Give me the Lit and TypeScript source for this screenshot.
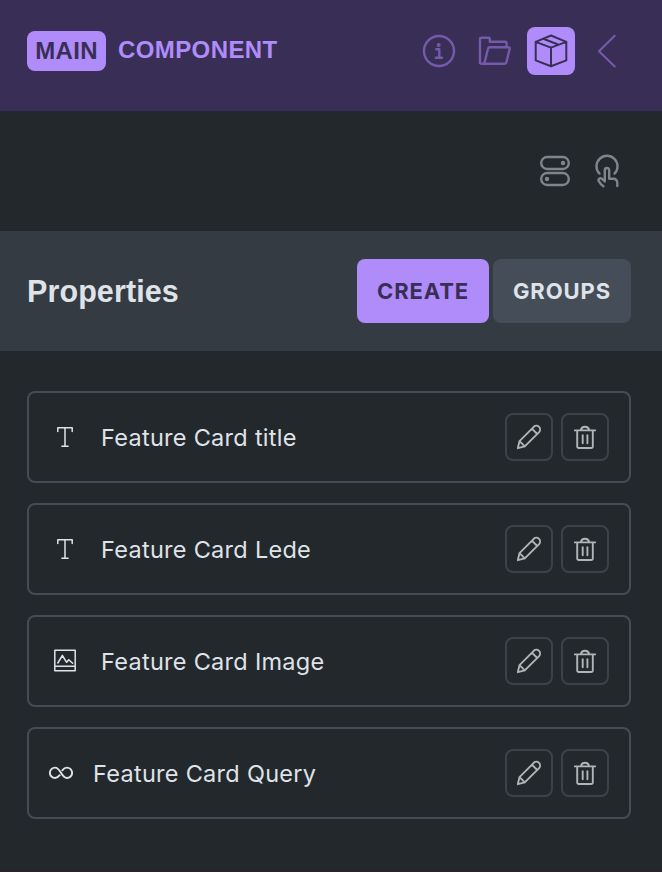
import { LitElement, html, css, svg } from "lit";
import { customElement } from "lit/decorators.js";
import { classMap } from "lit/directives/class-map.js";

type Kind = "text" | "image" | "link";

interface Property {
  label: string;
  kind: Kind;
}

const PROPERTIES: Property[] = [
  { label: "Feature Card title", kind: "text" },
  { label: "Feature Card Lede", kind: "text" },
  { label: "Feature Card Image", kind: "image" },
  { label: "Feature Card Query", kind: "link" },
];

const kindShapes = {
  text: svg`<path d="M4.8 6.5V2.8h14.4v3.7M12 2.8v18.4M8.9 21.2h6.2" stroke-width="1.5"/>`,
  image: svg`<path d="M1.8 1.3h20.4v20.4H1.8zM1.8 17.2h20.4M4.8 14 9.4 6.5l4.2 6.8 2.1-2.6 4 3.5" stroke-width="1.5"/>`,
  link: svg`<path d="M10.7 14.2C9.4 15.9 8.2 17 6.1 17A5.2 5.2 0 0 1 6.1 6.6C11.8 6.6 12.2 17 17.9 17A5.2 5.2 0 0 0 17.9 6.6C15.8 6.6 14.6 7.6 13.3 9.3" stroke-width="1.9"/>`,
};

@customElement("app-root")
export class AppRoot extends LitElement {
  static styles = css`
    :host {
      display: flex;
      flex-direction: column;
      box-sizing: border-box;
      width: 662px;
      height: 872px;
      overflow: hidden;
      background: #23282c;
      border-bottom: 2px solid #29242b;
      color: #dfe3e8;
      font-family: Inter, sans-serif;
    }
    svg {
      display: block;
      flex: none;
      fill: none;
      stroke: currentColor;
      stroke-linejoin: round;
      stroke-linecap: round;
    }
    header {
      display: flex;
      align-items: center;
      flex: none;
      box-sizing: border-box;
      height: 111px;
      padding: 0 31px 9px 27px;
      background: #392f56;
      color: #af8cf9;
    }
    .heading {
      display: flex;
      align-items: center;
      gap: 12px;
      font: 700 24px/40px "Liberation Sans", sans-serif;
    }
    .badge {
      box-sizing: border-box;
      width: 79px;
      height: 40px;
      border-radius: 8px;
      background: #af8cf9;
      color: #392f56;
      text-align: center;
      letter-spacing: 0.3px;
    }
    .component {
      letter-spacing: 0.4px;
      line-height: 38px;
      padding-bottom: 2px;
    }
    .nav {
      display: flex;
      gap: 8px;
      margin-left: auto;
    }
    .tab {
      width: 48px;
      height: 48px;
      border-radius: 8px;
      color: #7559aa;
    }
    .tab.active {
      background: #af8cf9;
      color: #392f56;
    }
    .tools {
      display: flex;
      flex: none;
      align-items: center;
      justify-content: flex-end;
      gap: 16px;
      height: 120px;
      padding-right: 37px;
      color: #7f858a;
    }
    .bar {
      display: flex;
      flex: none;
      align-items: center;
      justify-content: space-between;
      box-sizing: border-box;
      height: 120px;
      padding: 0 31px 0 27px;
      background: #343b43;
    }
    h2 {
      margin: 0;
      font: 700 30.5px/40px "Liberation Sans", sans-serif;
      letter-spacing: 0.1px;
    }
    .buttons {
      display: flex;
      gap: 4px;
    }
    button {
      box-sizing: border-box;
      margin: 0;
      padding: 0;
      border: 0;
      border-radius: 8px;
      background: none;
      color: inherit;
      font: 700 22px/64px Inter, sans-serif;
    }
    .create {
      width: 132px;
      height: 64px;
      background: #af8cf9;
      color: #392f56;
      letter-spacing: 0.9px;
    }
    .groups {
      width: 138px;
      height: 64px;
      background: #454e58;
      letter-spacing: 0.9px;
    }
    .list {
      display: flex;
      flex-direction: column;
      gap: 20px;
      padding: 40px 31px 0 27px;
    }
    .row {
      display: flex;
      align-items: center;
      box-sizing: border-box;
      height: 92px;
      padding: 0 20px 0 24px;
      border: 2px solid #454c55;
      border-radius: 8px;
    }
    .row.link {
      padding-left: 20px;
    }
    .label {
      margin-left: 24px;
      padding-top: 2px;
      font-size: 23.5px;
      line-height: 32px;
      letter-spacing: 0.28px;
    }
    .row.link .label {
      margin-left: 20px;
    }
    .actions {
      display: flex;
      gap: 8px;
      margin-left: auto;
      color: #b1b4b9;
    }
    .action {
      width: 48px;
      height: 48px;
      border: 2px solid #3c424a;
    }
    .action svg {
      margin: -2px;
    }
  `;

  private row(p: Property) {
    return html`<div class=${classMap({ row: true, [p.kind]: true })}>
      <svg width="24" height="24" viewBox="0 0 24 24">${kindShapes[p.kind]}</svg>
      <span class="label">${p.label}</span>
      <div class="actions">
        <button class="action" aria-label="Edit">
          <svg width="48" height="48" viewBox="0 0 48 48" stroke-width="1.9">
            <path d="M12.8 35.2l1.7-7.1L28.8 13.8a3.75 3.75 0 0 1 5.3 5.3L19.8 33.4zM14.5 28.1l5.3 5.3M26.9 15.7l5.3 5.3"/>
          </svg>
        </button>
        <button class="action" aria-label="Delete">
          <svg width="48" height="48" viewBox="0 0 48 48" stroke-width="1.9">
            <path d="M13.8 17.4h20.4M16.2 17.4v15.8q0 1.8 1.8 1.8h12q1.8 0 1.8-1.8V17.4M19.8 17.1a4.3 4.3 0 0 1 8.4 0M21.7 22.1v8.2M26.4 22.1v8.2"/>
          </svg>
        </button>
      </div>
    </div>`;
  }

  render() {
    return html`
      <header>
        <div class="heading">
          <span class="badge">MAIN</span><span class="component">COMPONENT</span>
        </div>
        <div class="nav">
          <svg class="tab" viewBox="0 0 48 48" stroke-width="2.4">
            <circle cx="24" cy="24" r="15"/>
            <circle cx="23.7" cy="17.9" r="2" fill="currentColor" stroke="none"/>
            <path d="M21.3 22.3h3v8.4M20.9 30.7h6"/>
          </svg>
          <svg class="tab" viewBox="0 0 48 48" stroke-width="2.4">
            <path d="M9 36V12.2q0-1.5 1.5-1.5h6.8q1.5 0 1.5 1.5v2.6h15.3q1.5 0 1.5 1.5v4M9 35q0 1.8 1.8 1.8h22.8q1.5 0 1.8-1.5l3.2-13.3q.4-1.8-1.4-1.8H18.8q-1.5 0-1.8 1.5L13.4 36.3"/>
          </svg>
          <svg class="tab active" viewBox="0 0 48 48" stroke-width="2">
            <path d="M24 8.5l15.3 6.4v18.5L24 39.2 8.7 33.4V14.9zM8.7 14.9L24 20.6l15.3-5.7M24 20.6v18.6M16.3 11.8l15.4 5.9"/>
          </svg>
          <svg class="tab" viewBox="0 0 48 48" stroke-width="2.1">
            <path d="M31.7 8.8L16 24.3 31.7 39.5"/>
          </svg>
        </div>
      </header>
      <div class="tools">
        <svg width="36" height="36" viewBox="0 0 36 36" stroke-width="2.4">
          <rect x="4.2" y="4" width="27.6" height="12" rx="6"/>
          <rect x="4.2" y="20" width="27.6" height="12" rx="6"/>
          <circle cx="26" cy="10" r="2.2" fill="currentColor" stroke="none"/>
          <circle cx="10" cy="26" r="2.2" fill="currentColor" stroke="none"/>
        </svg>
        <svg width="36" height="36" viewBox="0 0 36 36" stroke-width="2.4">
          <path d="M10.5 20.6A10.5 10.5 0 1 1 25.5 20.6M15.8 28.4V17.2a2.2 2.2 0 0 1 4.4 0V25.8h3.9q4.2 0 4.2 4.4v2.9M15.8 28.4l-2.9-2.6c-1.7-1.3-4.2.4-3 2.5 1 2 2.3 3.6 4.5 5"/>
        </svg>
      </div>
      <div class="bar">
        <h2>Properties</h2>
        <div class="buttons">
          <button class="create">CREATE</button>
          <button class="groups">GROUPS</button>
        </div>
      </div>
      <div class="list">${PROPERTIES.map((p) => this.row(p))}</div>
    `;
  }
}
